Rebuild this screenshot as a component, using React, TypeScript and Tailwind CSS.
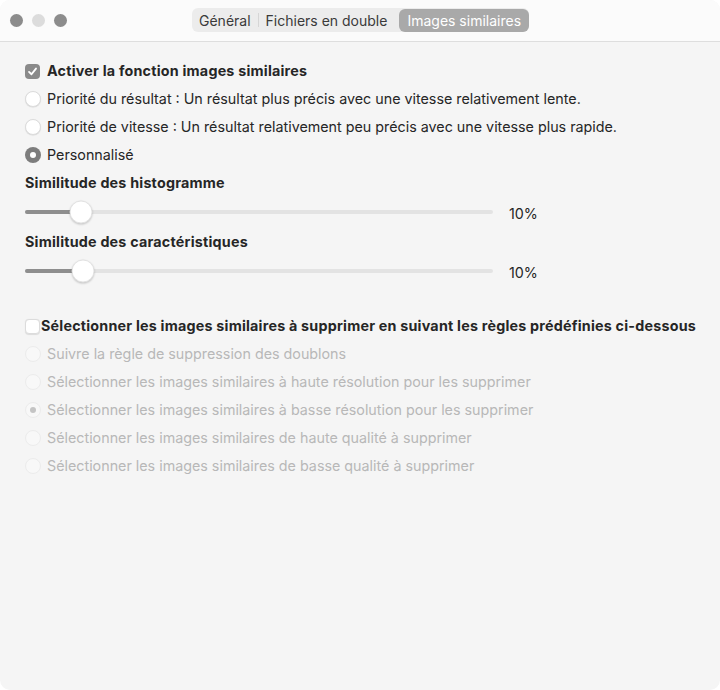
import React, { useState } from 'react';

const FONT = 'font-["Inter","Liberation_Sans",sans-serif]';

const tabs = ['Général', 'Fichiers en double', 'Images similaires'];

const speedOptions = [
  'Priorité du résultat : Un résultat plus précis avec une vitesse relativement lente.',
  'Priorité de vitesse : Un résultat relativement peu précis avec une vitesse plus rapide.',
  'Personnalisé',
];

const deleteRules = [
  'Suivre la règle de suppression des doublons',
  'Sélectionner les images similaires à haute résolution pour les supprimer',
  'Sélectionner les images similaires à basse résolution pour les supprimer',
  'Sélectionner les images similaires de haute qualité à supprimer',
  'Sélectionner les images similaires de basse qualité à supprimer',
];

const Radio: React.FC<{ checked: boolean; disabled?: boolean }> = ({ checked, disabled }) => {
  if (disabled) {
    return (
      <span className="flex h-4 w-4 shrink-0 items-center justify-center rounded-full border border-[#ececec] bg-[#f8f8f8]">
        {checked && <span className="h-[6px] w-[6px] rounded-full bg-[#c4c4c4]" />}
      </span>
    );
  }
  if (checked) {
    return (
      <span className="flex h-4 w-4 shrink-0 items-center justify-center rounded-full bg-[#7d7d7d]">
        <span className="h-[6px] w-[6px] rounded-full bg-white" />
      </span>
    );
  }
  return (
    <span className="h-4 w-4 shrink-0 rounded-full border border-[#dcdcdc] bg-white shadow-[0_0.5px_1px_rgba(0,0,0,0.12)]" />
  );
};

const Slider: React.FC<{ value: number; thumbX: number }> = ({ value, thumbX }) => (
  <div className="flex h-[30px] items-center">
    <div className="relative h-[4px] w-[468px] rounded-full bg-[#e3e3e3]">
      <div className="absolute left-0 top-0 h-[4px] rounded-full bg-[#8e8e8e]" style={{ width: thumbX }} />
      <div
        className="absolute top-1/2 h-[23px] w-[23px] -translate-x-1/2 -translate-y-1/2 rounded-full border border-[#e2e2e2] bg-white shadow-[0_1px_2px_rgba(0,0,0,0.18)]"
        style={{ left: thumbX }}
      />
    </div>
    <span className="ml-[16px] pt-[4px] text-[#262626]">{value}%</span>
  </div>
);

export default function App() {
  const [speed, setSpeed] = useState(2);

  return (
    <div className={`${FONT} h-[690px] w-[720px] bg-white`}>
      <div className="flex h-full w-full flex-col overflow-hidden rounded-[10px] bg-[#f5f5f5]">
        <div className="relative flex h-[42px] shrink-0 items-center border-b border-[#dedede] bg-[#fbfbfb]">
          <div className="absolute left-[10px] top-[14px] flex gap-[9px]">
            <span className="h-[13px] w-[13px] rounded-full bg-[#8c8c8c]" />
            <span className="h-[13px] w-[13px] rounded-full bg-[#dcdcdc]" />
            <span className="h-[13px] w-[13px] rounded-full bg-[#8c8c8c]" />
          </div>
          <div className="ml-[192px] mt-[-1px] flex h-[24px] items-center rounded-[6px] bg-[#ececec] text-[14px] text-[#3a3a3a]">
            {tabs.map((t, i) => (
              <React.Fragment key={t}>
                {i === 1 && <span className="h-[14px] w-px bg-[#d6d6d6]" />}
                <span
                  className={
                    i === 2
                      ? 'ml-[5px] flex h-[23px] items-center rounded-[6px] bg-[#a9a9a9] px-[8px] text-white'
                      : 'px-[7px]'
                  }
                >
                  {t}
                </span>
              </React.Fragment>
            ))}
          </div>
        </div>

        <div className="flex flex-col whitespace-nowrap pl-[25px] pt-[15px] text-[14.3px] text-[#262626]">
          <div className="flex h-[28px] items-center gap-[7px]">
            <span className="flex h-[15px] w-[15px] shrink-0 items-center justify-center rounded-[4px] bg-[#8a8a8a]">
              <svg width="11" height="11" viewBox="0 0 12 12" fill="none">
                <path d="M2.2 6.4 L4.9 9 L9.8 2.8" stroke="white" strokeWidth="2" strokeLinecap="round" strokeLinejoin="round" />
              </svg>
            </span>
            <span className="font-bold tracking-[0.22px]">Activer la fonction images similaires</span>
          </div>

          {speedOptions.map((label, i) => (
            <div key={label} className="flex h-[28px] cursor-default items-center gap-[6px]" onClick={() => setSpeed(i)}>
              <Radio checked={speed === i} />
              <span>{label}</span>
            </div>
          ))}

          <div className="flex h-[28px] items-center font-bold tracking-[0.22px]">Similitude des histogramme</div>
          <Slider value={10} thumbX={56} />
          <div className="flex h-[29px] items-center font-bold tracking-[0.22px]">Similitude des caractéristiques</div>
          <Slider value={10} thumbX={58} />

          <div className="mt-[26px] flex h-[28px] items-center">
            <span className="h-[15px] w-[15px] shrink-0 rounded-[4px] border border-[#dcdcdc] bg-white shadow-[0_0.5px_1px_rgba(0,0,0,0.1)]" />
            <span className="ml-px font-bold tracking-[0.22px]">
              Sélectionner les images similaires à supprimer en suivant les règles prédéfinies ci-dessous
            </span>
          </div>

          {deleteRules.map((label, i) => (
            <div key={label} className="flex h-[28px] items-center gap-[6px] text-[#b8b8b8]">
              <Radio checked={i === 2} disabled />
              <span>{label}</span>
            </div>
          ))}
        </div>
      </div>
    </div>
  );
}
